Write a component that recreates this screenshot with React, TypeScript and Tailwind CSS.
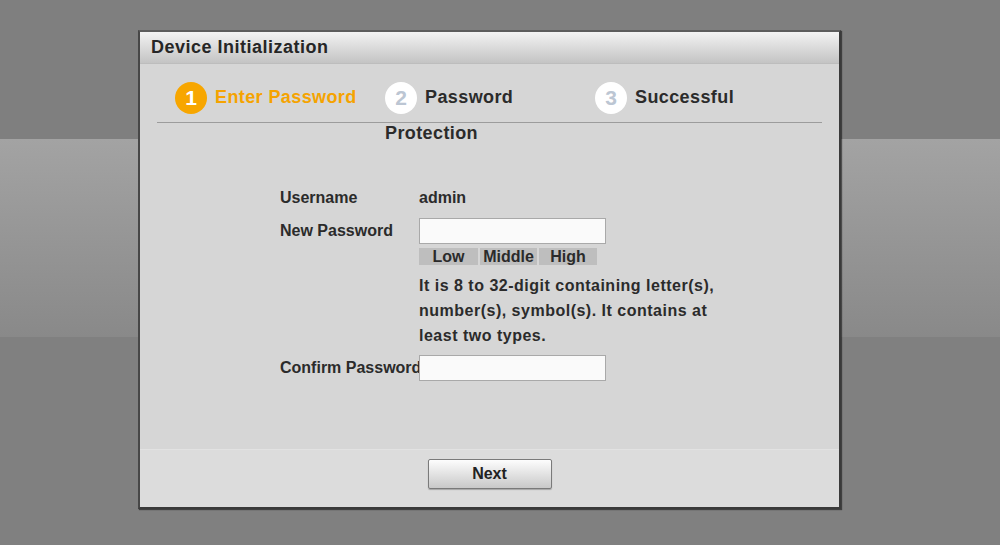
const font = "font-['Liberation_Sans',Arial,sans-serif]";

type StepProps = {
  n: number;
  label: string;
  more?: string;
  active?: boolean;
};

function Step({ n, label, more, active = false }: StepProps) {
  return (
    <div className="w-[210px] shrink-0 text-[18px] font-bold leading-[35px] tracking-[0.4px]">
      <div className="flex h-[35px] items-center">
        <span
          className={`mr-2 flex h-8 w-8 items-center justify-center rounded-full text-[21px] tracking-normal ${
            active ? "bg-[#f7a600] text-white" : "bg-white text-[#bcc6d3]"
          }`}
        >
          {n}
        </span>
        <span className={active ? "text-[#f5a300]" : "text-[#2b2b2b]"}>{label}</span>
      </div>
      {more && <div className="mt-[1px] text-[#2b2b2b]">{more}</div>}
    </div>
  );
}

function TextInput() {
  return (
    <input
      type="text"
      className="h-[26px] w-[187px] border border-[#a9a9a9] bg-[#fafafa] px-1 text-[14px] outline-none"
    />
  );
}

export default function App() {
  return (
    <div className={`relative h-[545px] w-full overflow-hidden bg-[#808080] ${font}`}>
      <div className="h-[139px] bg-[#7f7f7f]" />
      <div className="h-[198px] bg-gradient-to-b from-[#a3a3a3] to-[#898989]" />

      {/* modal window */}
      <div className="absolute left-[138px] top-[30px] flex h-[479px] w-[703px] flex-col border-2 border-[#3a3a3a] border-t-[#5c5c5c] border-l-[#474747] bg-[#d6d6d6] shadow-[1px_1px_1px_rgba(0,0,0,0.5)]">
        <div className="flex h-[32px] items-center border-b border-[#bdbdbd] bg-gradient-to-b from-[#f3f3f3] to-[#c4c4c4] px-[11px] text-[18px] font-bold tracking-[0.5px] text-[#262626]">
          Device Initialization
        </div>

        <div className="flex-1 px-[17px] pt-[16px]">
          <div className="flex h-[43px] border-b border-[#9c9c9c] pl-[18px]">
            <Step n={1} label="Enter Password" active />
            <Step n={2} label="Password" more="Protection" />
            <Step n={3} label="Successful" />
          </div>

          <div className="ml-[123px] mt-[62px] grid grid-cols-[139px_1fr] text-[16px] font-bold leading-[26px] text-[#2b2b2b]">
            <div>Username</div>
            <div>admin</div>

            <div className="mt-[7px]">New Password</div>
            <div className="mt-[7px]">
              <TextInput />
              <div className="mt-[4px] flex h-[17px] w-[178px] gap-[2px] text-center leading-[17px]">
                <div className="w-[59px] bg-[#bebebe]">Low</div>
                <div className="w-[57px] bg-[#bebebe]">Middle</div>
                <div className="w-[58px] bg-[#bebebe]">High</div>
              </div>
              <p className="mt-[8px] w-[310px] leading-[25px] tracking-[0.5px]">
                It is 8 to 32-digit containing letter(s), number(s), symbol(s). It contains at
                least two types.
              </p>
            </div>

            <div className="mt-[7px] whitespace-nowrap">Confirm Password</div>
            <div className="mt-[7px]">
              <TextInput />
            </div>
          </div>
        </div>

        <div className="flex h-[58px] justify-center border-t border-[#e2e2e2] bg-[#dcdcdc] pt-[9px]">
          <button className="h-[30px] w-[124px] rounded-[2px] border border-[#7a7a7a] bg-gradient-to-b from-[#fdfdfd] to-[#c9c9c9] text-[16px] font-bold text-[#222] shadow-[0_1px_1px_rgba(0,0,0,0.25)]">
            Next
          </button>
        </div>
      </div>
    </div>
  );
}
